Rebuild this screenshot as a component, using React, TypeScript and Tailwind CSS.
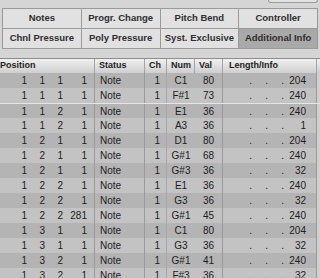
// Event list: filter buttons on top, event table below

type Row = {
  pos: [string, string, string, string];
  status: string;
  ch: string;
  num: string;
  val: string;
  len: string;
};

const buttons: { label: string; active?: boolean }[] = [
  { label: "Notes" },
  { label: "Progr. Change" },
  { label: "Pitch Bend" },
  { label: "Controller" },
  { label: "Chnl Pressure" },
  { label: "Poly Pressure" },
  { label: "Syst. Exclusive" },
  { label: "Additional Info", active: true },
];

const rows: Row[] = [
  { pos: ["1", "1", "1", "1"], status: "Note", ch: "1", num: "C1", val: "80", len: "204" },
  { pos: ["1", "1", "1", "1"], status: "Note", ch: "1", num: "F#1", val: "73", len: "240" },
  { pos: ["1", "1", "2", "1"], status: "Note", ch: "1", num: "E1", val: "36", len: "240" },
  { pos: ["1", "1", "2", "1"], status: "Note", ch: "1", num: "A3", val: "36", len: "1" },
  { pos: ["1", "2", "1", "1"], status: "Note", ch: "1", num: "D1", val: "80", len: "204" },
  { pos: ["1", "2", "1", "1"], status: "Note", ch: "1", num: "G#1", val: "68", len: "240" },
  { pos: ["1", "2", "1", "1"], status: "Note", ch: "1", num: "G#3", val: "36", len: "32" },
  { pos: ["1", "2", "2", "1"], status: "Note", ch: "1", num: "E1", val: "36", len: "240" },
  { pos: ["1", "2", "2", "1"], status: "Note", ch: "1", num: "G3", val: "36", len: "32" },
  { pos: ["1", "2", "2", "281"], status: "Note", ch: "1", num: "G#1", val: "45", len: "240" },
  { pos: ["1", "3", "1", "1"], status: "Note", ch: "1", num: "C1", val: "80", len: "204" },
  { pos: ["1", "3", "1", "1"], status: "Note", ch: "1", num: "G3", val: "36", len: "32" },
  { pos: ["1", "3", "2", "1"], status: "Note", ch: "1", num: "G#1", val: "41", len: "240" },
  { pos: ["1", "3", "2", "1"], status: "Note", ch: "1", num: "F#3", val: "36", len: "32" },
];

const cols = "grid grid-cols-[95px_50px_22px_28px_28px_94px_3px]";

export default function App() {
  return (
    <div className="w-[320px] h-[278px] overflow-hidden bg-[#d5d5d5] font-['Liberation_Sans',Arial,sans-serif] text-[#1c1c1c]">
      {/* top strip */}
      <div className="h-[8px] flex justify-end pr-[2px]">
        <div className="w-[50px] h-[3px] border border-t-0 border-[#9c9c9c] rounded-b-[3px] bg-[#e2e2e2]"></div>
      </div>

      {/* filter buttons */}
      <div className="mx-[2px] grid grid-cols-4 border-t border-l border-[#9a9a9a]">
        {buttons.map((b) => (
          <div
            key={b.label}
            className={`h-[20px] flex items-center justify-center border-r border-b border-[#9a9a9a] text-[9.5px] font-bold text-[#2e2e2e] ${
              b.active ? "bg-[#a9a9a9]" : "bg-[#e1e1e1]"
            }`}
          >
            {b.label}
          </div>
        ))}
      </div>

      <div className="h-[9px]"></div>

      {/* header */}
      <div className={`${cols} h-[15px] border-t border-[#8c8c8c] bg-gradient-to-b from-[#f0f0f0] to-[#cfcfcf] text-[9px] font-bold text-[#222]`}>
        <div className="border-r border-[#a3a3a3] flex items-center">Position</div>
        <div className="border-r border-[#a3a3a3] flex items-center pl-[4px]">Status</div>
        <div className="border-r border-[#a3a3a3] flex items-center pl-[4px]">Ch</div>
        <div className="border-r border-[#a3a3a3] flex items-center pl-[4px]">Num</div>
        <div className="border-r border-[#a3a3a3] flex items-center pl-[4px]">Val</div>
        <div className="border-r border-[#a3a3a3] flex items-center pl-[6px]">Length/Info</div>
        <div></div>
      </div>

      {/* rows */}
      <div className="text-[10px]">
        {rows.map((r, i) => (
          <div
            key={i}
            className={`${cols} h-[15px] ${i % 2 === 0 ? "bg-[#b4b4b4]" : "bg-[#c3c3c3]"} ${
              i === 2 ? "border-t border-[#e6e6e6] h-[15px]" : ""
            }`}
          >
            <div className="border-r border-[#9a9a9a] grid grid-cols-[27px_18px_18px_24px] items-center text-right">
              {r.pos.map((p, j) => (
                <span key={j}>{p}</span>
              ))}
            </div>
            <div className="border-r border-[#9a9a9a] flex items-center pl-[5px]">{r.status}</div>
            <div className="border-r border-[#a8a8a8] flex items-center justify-end pr-[6px]">{r.ch}</div>
            <div className="flex items-center justify-center">{r.num}</div>
            <div className="border-r border-[#9a9a9a] flex items-center justify-center">{r.val}</div>
            <div className="border-r border-[#9a9a9a] grid grid-cols-[29px_16px_16px_22px] items-center text-right">
              <span>.</span>
              <span>.</span>
              <span>.</span>
              <span>{r.len}</span>
            </div>
            <div className="bg-[#d0d0d0]"></div>
          </div>
        ))}
      </div>
    </div>
  );
}
